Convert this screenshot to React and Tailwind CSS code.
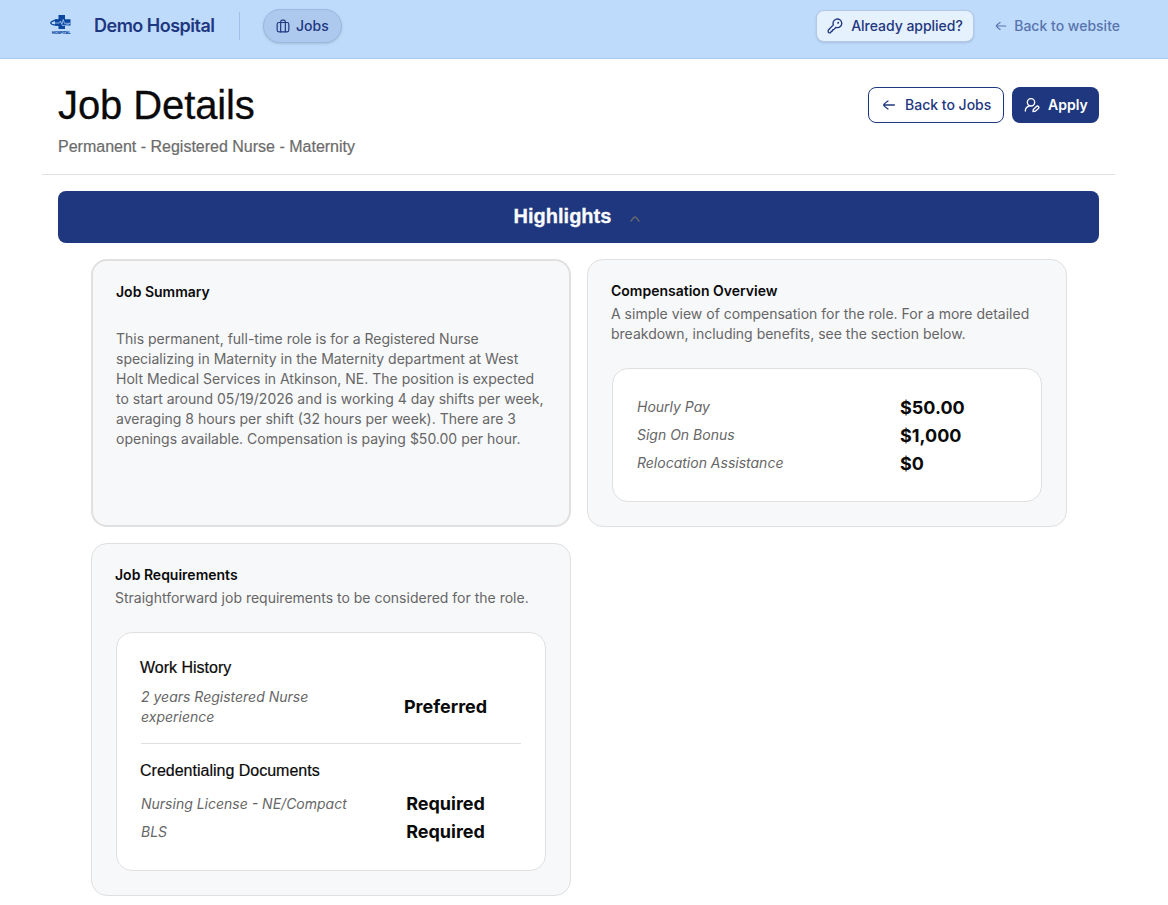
import React, { useState } from 'react';

const compensation = [
  { label: 'Hourly Pay', value: '$50.00' },
  { label: 'Sign On Bonus', value: '$1,000' },
  { label: 'Relocation Assistance', value: '$0' },
];

const documents = [
  { label: 'Nursing License - NE/Compact', value: 'Required' },
  { label: 'BLS', value: 'Required' },
];

function HospitalLogo() {
  return (
    <svg width="22" height="22" viewBox="0 0 22 22" className="shrink-0">
      <path d="M8.500 0h6.500v4.200h5.500v6.300H15V14H8.500v-3.500H5V4.200h3.500z" fill="#0b47a1" />
      <path d="M8.500 5C3.500 5.200.7 6.600.8 8c.2 1.700 5 2.700 10 2.300" fill="none" stroke="#0b47a1" strokeWidth="1.400" />
      <path d="M4.500 8h5l1-2 1.400 3.500 1.300-5 1.300 3.800H20" fill="none" stroke="#a9cbf3" strokeWidth=".8" />
      <path d="M12 10.500c4 0 7.500-1 8.500-2.800" fill="none" stroke="#a9cbf3" strokeWidth=".8" />
      <text x="11.300" y="19" textAnchor="middle" textLength="18.500" lengthAdjust="spacingAndGlyphs" fontSize="4" fontWeight="700" fontFamily="Liberation Sans, sans-serif" fill="#0b47a1" stroke="#0b47a1" strokeWidth=".2">HOSPITAL</text>
    </svg>
  );
}

function Icon({ size = 16, children, className = '' }) {
  return (
    <svg width={size} height={size} viewBox="0 0 24 24" fill="none" stroke="currentColor" strokeWidth="2" strokeLinecap="round" strokeLinejoin="round" className={`shrink-0 ${className}`}>
      {children}
    </svg>
  );
}

function ArrowLeftIcon({ size, className }) {
  return (
    <Icon size={size} className={className}>
      <path d="M20 12H4.500M10.500 18s-6.500-4.400-6.500-6 6.500-6 6.500-6" />
    </Icon>
  );
}

function Header() {
  return (
    <header className="h-[59px] bg-[#bedbfb] border-b border-[#a9cdf3] text-[#1e377f]">
      <div className="h-[52px] flex items-center justify-between pl-[50px] pr-12">
        <div className="flex items-center">
          <HospitalLogo />
          <span className="ml-[22px] w-[121px] text-lg font-semibold tracking-[-0.5px] whitespace-nowrap">Demo Hospital</span>
          <span className="ml-6 h-7 w-px bg-[#a3bfe8]" />
          <button className="flex ml-[23px] h-[34px] w-[79px] items-center gap-1.5 rounded-full border border-[#9db8df] bg-[#aec9ee] pl-3 text-sm font-medium shadow-sm">
            <Icon size={14}>
              <rect x="2" y="6" width="20" height="16" rx="3" />
              <path d="M8 22V5a3 3 0 0 1 3-3h2a3 3 0 0 1 3 3v17" />
            </Icon>
            Jobs
          </button>
        </div>
        <div className="flex items-center">
          <button className="flex h-8 w-[158px] items-center gap-2 rounded-lg border border-[#b4c8e8] bg-[#e5f1fd] pl-2.5 text-sm font-medium tracking-[-0.03px] whitespace-nowrap shadow-sm">
            <Icon size={16}>
              <path d="M15.500 14.500a6.500 6.500 0 1 0-6-4.200L2.400 17.600c-.4.400-.6.900-.6 1.500v1.400c0 1 .7 1.700 1.700 1.700h1.400c.7 0 1.100-.5 1.100-1.100 0-.8.4-1.200 1.100-1.200.8 0 1.200-.4 1.200-1.100 0-.8.400-1.200 1.100-1.200.5 0 .8-.2 1.100-.5l3-3.100c.6.300 1.300.5 2 .5z" />
              <path d="M17 7l-.5.500" strokeWidth="2.500" />
            </Icon>
            Already applied?
          </button>
          <a className="ml-5 flex items-center gap-1.5 text-sm font-medium text-[#5874ae] whitespace-nowrap">
            <ArrowLeftIcon size={14} />
            Back to website
          </a>
        </div>
      </div>
    </header>
  );
}

function Row({ label, value, center }) {
  return (
    <div className="grid grid-cols-[228px_1fr] items-center">
      <span className="text-sm italic text-[#666]">{label}</span>
      <span className={center ? 'pl-px text-center text-lg font-bold' : 'relative top-px pl-[35px] text-lg font-bold'}>{value}</span>
    </div>
  );
}

export default function App() {
  const [open, setOpen] = useState(true);

  return (
    <div className="h-[905px] overflow-hidden bg-white font-['Inter',sans-serif] text-[#0a0a0a]">
      <Header />
      <main className="ml-[42px] w-[1073px] bg-white">
        <div className="flex h-[116px] justify-between border-b border-[#e0e0e0] px-4 pt-[22px]">
          <div className="font-['Liberation_Sans',sans-serif]">
            <h1 className="text-[40px] leading-12 tracking-[-0.1px] [-webkit-text-stroke:0.3px]">Job Details</h1>
            <p className="mt-1.5 text-base leading-6 text-[#6b6b6b] [-webkit-text-stroke:0.2px]">Permanent - Registered Nurse - Maternity</p>
          </div>
          <div className="mt-1.5 flex gap-2 text-sm">
            <button className="flex h-9 w-[136px] items-center gap-2 rounded-lg border border-[#1e377f] pl-3 font-medium text-[#1e377f] whitespace-nowrap">
              <ArrowLeftIcon size={16} />
              Back to Jobs
            </button>
            <button className="flex h-9 w-[87px] items-center gap-2 rounded-lg bg-[#1e377f] pl-3 font-semibold text-white">
              <Icon size={16}>
                <circle cx="10.500" cy="8" r="5.500" />
                <path d="M2 21c0-3.500 2.200-6.200 5.500-7.300" />
                <path d="M13.500 21.800l.5-3.200 4.600-4.300a2 2 0 0 1 3 3L17 21.300z" />
              </Icon>
              Apply
            </button>
          </div>
        </div>

        <button
          onClick={() => setOpen(!open)}
          className="mx-4 mt-4 flex h-[52px] w-[1041px] items-center justify-center rounded-lg bg-[#1e377f] pb-0.5 font-['Liberation_Sans',sans-serif] text-xl font-bold text-[#fafafa] [-webkit-text-stroke:0.3px]"
        >
          Highlights
          <Icon size={16} className="ml-4 mt-1.5 text-[#6b6b6b]">
            <path d="M18 15s-4.400-6-6-6-6 6-6 6" />
          </Icon>
        </button>

        {open && (
          <div className="ml-[49px] mt-4 grid grid-cols-[480px_480px] gap-4">
            <section className="h-[268px] rounded-2xl border-2 border-[#e0e0e0] bg-[#f7f8fa] px-[23px] pt-[21px]">
              <h2 className="text-sm font-semibold">Job Summary</h2>
              <p className="mt-[27px] w-[430px] text-sm text-[#666]">
                This permanent, full-time role is for a Registered Nurse specializing in Maternity in the Maternity department at West Holt Medical Services in Atkinson, NE. The position is expected to start around 05/19/2026 and is working 4 day shifts per week, averaging 8 hours per shift (32 hours per week). There are 3 openings available. Compensation is paying $50.00 per hour.
              </p>
            </section>

            <section className="h-[268px] rounded-2xl border border-[#e0e0e0] bg-[#f7f8fa] px-6 pt-[21px]">
              <h2 className="-ml-px text-sm font-semibold">Compensation Overview</h2>
              <p className="-ml-px mt-[3px] text-sm text-[#666]">
                A simple view of compensation for the role. For a more detailed breakdown, including benefits, see the section below.
              </p>
              <div className="mt-6 h-[134px] rounded-2xl border border-[#e0e0e0] bg-white px-6 pt-6">
                {compensation.map((item) => (
                  <Row key={item.label} {...item} />
                ))}
              </div>
            </section>

            <section className="h-[353px] rounded-2xl border border-[#e0e0e0] bg-[#f7f8fa] px-6 pt-[21px]">
              <h2 className="-ml-px text-sm font-semibold">Job Requirements</h2>
              <p className="-ml-px mt-[3px] text-sm text-[#666]">Straightforward job requirements to be considered for the role.</p>
              <div className="mt-6 h-[239px] rounded-2xl border border-[#e0e0e0] bg-white px-6 pt-[23px]">
                <h3 className="-ml-px font-['Liberation_Sans',sans-serif] text-base [-webkit-text-stroke:0.2px]">Work History</h3>
                <div className="mt-[7px]">
                  <Row label="2 years Registered Nurse experience" value="Preferred" center />
                </div>
                <div className="mb-[15px] mt-4 border-t border-[#e0e0e0]" />
                <h3 className="-ml-px font-['Liberation_Sans',sans-serif] text-base [-webkit-text-stroke:0.2px]">Credentialing Documents</h3>
                <div className="mt-[7px]">
                  {documents.map((item) => (
                    <Row key={item.label} {...item} center />
                  ))}
                </div>
              </div>
            </section>
          </div>
        )}
      </main>
    </div>
  );
}
